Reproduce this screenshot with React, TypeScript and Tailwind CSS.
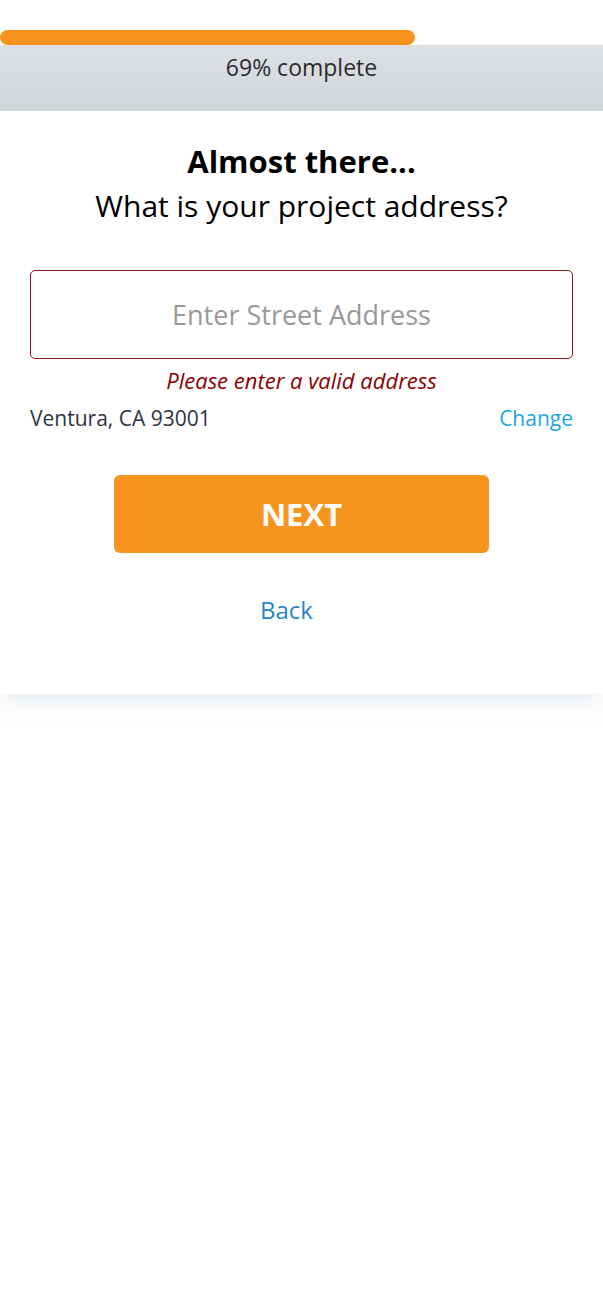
import React, { useState } from 'react';

const App: React.FC = () => {
  const [address, setAddress] = useState('');
  const progress = 69;

  return (
    <div
      className="min-h-[1311px] w-full bg-white"
      style={{ fontFamily: '"Open Sans", "Noto Sans", sans-serif' }}
    >
      {/* Progress header */}
      <div className="pt-[30px]">
        <div className="h-[15px] w-[601px] rounded-r-full bg-white">
          <div
            className="h-full rounded-full bg-[#f7931e]"
            style={{ width: `${progress}%` }}
          />
        </div>
        <div className="flex h-[66px] items-start justify-center bg-gradient-to-b from-[#dcdfe3] to-[#d3d7dd] pt-[5px]">
          <span className="text-[23px] text-[#2b2b2b]">{progress}% complete</span>
        </div>
      </div>

      {/* Card */}
      <div className="bg-white pb-[68px] pt-[28px] shadow-[0_10px_22px_rgba(180,195,210,0.25)]">
        <h1 className="text-center text-[31px] font-bold leading-[44px] text-black">
          Almost there...
        </h1>
        <h2 className="text-center text-[30px] leading-[46px] text-black">
          What is your project address?
        </h2>

        <div className="mx-[30px] mt-[41px]">
          <input
            value={address}
            onChange={(e) => setAddress(e.target.value)}
            placeholder="Enter Street Address"
            className="h-[89px] w-full rounded-[5px] border border-[#8b1a1f] bg-white text-center text-[27px] text-[#333] outline-none placeholder:text-[#999]"
          />
          <p className="mt-[8px] text-center text-[22px] italic leading-[26px] text-[#8b0000]">
            Please enter a valid address
          </p>
          <div className="mt-[12px] flex items-center justify-between text-[21px] leading-[26px]">
            <span className="text-[#2d3442]">Ventura, CA 93001</span>
            <button className="text-[#1ba6dc]">Change</button>
          </div>
        </div>

        <div className="mt-[44px] flex justify-center">
          <button className="h-[78px] w-[375px] rounded-[6px] bg-[#f7941e] text-[31px] font-bold text-white">
            NEXT
          </button>
        </div>

        <div className="mt-[40px] flex justify-center pr-[30px]">
          <button className="text-[24px] leading-[33px] text-[#2a86c4]">Back</button>
        </div>
      </div>
    </div>
  );
};

export default App;
